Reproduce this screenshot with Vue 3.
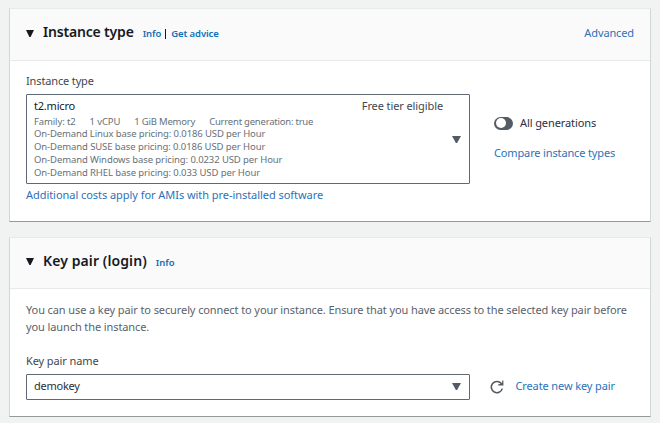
<script setup>
const prices = [
  { text: 'On-Demand Linux base pricing: 0.0186 USD per Hour', cls: 'p-linux' },
  { text: 'On-Demand SUSE base pricing: 0.0186 USD per Hour', cls: 'p-suse' },
  { text: 'On-Demand Windows base pricing: 0.0232 USD per Hour', cls: 'p-windows' },
  { text: 'On-Demand RHEL base pricing: 0.033 USD per Hour', cls: 'p-rhel' },
]
</script>

<template>
  <main class="page">
    <section class="card instance">
      <header class="head">
        <svg class="caret" width="8" height="7" viewBox="0 0 8 7"><path d="M0 0H8L4.6 7H3.4Z" /></svg>
        <h2>Instance type</h2>
        <span class="links"><a>Info</a><i class="bar"></i><a>Get advice</a></span>
        <a class="link advanced">Advanced</a>
      </header>
      <div class="body">
        <label class="label">Instance type</label>
        <div class="row">
          <div class="select tall">
            <div class="option">
              <div class="top"><span class="name">t2.micro</span><span class="tier">Free tier eligible</span></div>
              <div class="specs">
                <span>Family: t2</span><span>1 vCPU</span><span class="mem">1 GiB Memory</span><span class="gen">Current generation: true</span>
              </div>
              <div v-for="p in prices" :key="p.cls" class="price" :class="p.cls"><span>{{ p.text }}</span></div>
            </div>
            <svg class="arrow" width="9" height="7" viewBox="0 0 9 7"><path d="M0 0H9L5.1 7H3.9Z" /></svg>
          </div>
          <div class="side">
            <div class="toggle-row"><span class="toggle"><span class="knob"></span></span><span class="gens">All generations</span></div>
            <a class="link compare">Compare instance types</a>
          </div>
        </div>
        <a class="link costs">Additional costs apply for AMIs with pre-installed software</a>
      </div>
    </section>

    <section class="card keypair">
      <header class="head">
        <svg class="caret" width="8" height="7" viewBox="0 0 8 7"><path d="M0 0H8L4.6 7H3.4Z" /></svg>
        <h2 class="login">Key pair (login)</h2>
        <span class="links"><a>Info</a></span>
      </header>
      <div class="body">
        <p class="desc">You can use a key pair to securely connect to your instance. Ensure that you have access to the selected key pair before<br>you launch the instance.</p>
        <label class="label keyname">Key pair name</label>
        <div class="row">
          <div class="select">
            <span class="value">demokey</span>
            <svg class="arrow" width="9" height="7" viewBox="0 0 9 7"><path d="M0 0H9L5.1 7H3.9Z" /></svg>
          </div>
          <svg class="refresh" width="14" height="14" viewBox="0 0 14 14">
            <path d="M12.3 8.6A5.6 5.6 0 1 1 11.3 3.6L12.4 4.6" />
            <path class="tip" d="M13.4 .4V5.6H8.2V4.2L10.6 4L12.2 2.4V.4Z" />
          </svg>
          <a class="link create">Create new key pair</a>
        </div>
      </div>
    </section>
  </main>
</template>

<style>
body { background: #f1f3f3; }
</style>

<style scoped>
.page {
  box-sizing: border-box;
  height: 423px;
  padding: 8px 9px 0;
  display: flex;
  flex-direction: column;
  gap: 15px;
  overflow: hidden;
  background: #f1f3f3;
  color: #16191f;
  font-family: "Noto Sans", "Open Sans", sans-serif;
  font-size: 11px;
  line-height: 18px;
  white-space: nowrap;
}
.card {
  box-sizing: border-box;
  width: 642px;
  background: #fff;
  border: 1px solid #d2d6d6;
  border-top-color: #e6eaea;
  border-bottom-color: #929a9b;
}
.instance { height: 214px; }
.keypair { height: 180px; }
.head {
  box-sizing: border-box;
  display: flex;
  align-items: center;
  height: 52px;
  padding: 0 16px 2px;
  background: #fafafa;
  border-bottom: 1px solid #e6eaea;
}
.keypair .head { height: 51px; padding-bottom: 1px; }
.caret { fill: #16191f; }
.keypair .caret { margin-bottom: 2px; }
h2 {
  margin: 0 0 3px 9px;
  font-size: 14px;
  line-height: 20px;
  font-weight: 600;
  letter-spacing: -0.18px;
}
h2.login { letter-spacing: 0.1px; }
.links {
  display: flex;
  align-items: center;
  margin-left: 9px;
  font-size: 9.5px;
  font-weight: 600;
  letter-spacing: -0.1px;
  color: #0f6fb8;
}
.bar { width: 1px; height: 10px; margin: 0 5px 0 4px; background: #16191f; }
.link { color: #2b72b8; }
.advanced { margin: 0 0 2px auto; letter-spacing: -0.12px; }
.body { padding: 11px 16px 0; }
.label { display: block; margin-bottom: 4px; color: #414750; letter-spacing: -0.14px; }
.keyname { letter-spacing: -0.1px; }
.row { display: flex; align-items: center; }
.select {
  box-sizing: border-box;
  display: flex;
  align-items: center;
  justify-content: space-between;
  width: 444px;
  height: 26px;
  padding: 0 8px 0 7px;
  border: 1px solid #5f6973;
  border-radius: 1px;
}
.tall { height: 90px; }
.arrow { fill: #545b64; }
.keypair .arrow { margin-bottom: 1px; }
.option { width: 409px; padding-bottom: 3px; }
.top { display: flex; justify-content: space-between; line-height: 20px; }
.name { color: #16191f; letter-spacing: -0.2px; }
.tier { color: #414750; letter-spacing: -0.1px; }
.specs, .price { font-size: 9.5px; line-height: 12.8px; color: #687078; }
.specs { display: flex; gap: 14px; letter-spacing: -0.12px; }
.specs .mem { letter-spacing: -0.2px; }
.specs .gen { letter-spacing: -0.22px; }
.p-linux { letter-spacing: -0.12px; }
.p-suse { letter-spacing: -0.09px; }
.p-windows, .p-rhel { letter-spacing: -0.1px; }
.side { margin: 0 0 2px 24px; display: flex; flex-direction: column; gap: 12px; }
.toggle-row { display: flex; align-items: center; gap: 7px; color: #2b3038; }
.gens { letter-spacing: -0.1px; }
.toggle { width: 19px; height: 13px; border-radius: 7px; background: #545b64; display: flex; align-items: center; }
.knob { width: 10px; height: 10px; margin-left: 1.5px; border-radius: 50%; background: #fff; }
.compare { letter-spacing: -0.14px; }
.costs { display: block; margin-top: 2px; letter-spacing: -0.05px; }
.desc { margin: 0 0 17px; padding-top: 1px; line-height: 17px; color: #5a626b; letter-spacing: -0.1px; }
.value { margin-bottom: 2px; color: #2b3038; letter-spacing: -0.25px; }
.refresh { margin: 0 0 1px 20px; fill: none; stroke: #545b64; stroke-width: 1.6; }
.refresh .tip { fill: #545b64; stroke: none; }
.create { margin: 0 0 2px 11.5px; letter-spacing: -0.12px; }
</style>
